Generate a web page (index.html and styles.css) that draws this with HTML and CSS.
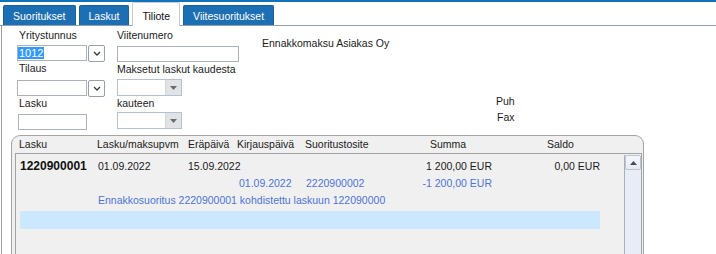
FILE: index.html
```html
<!DOCTYPE html>
<html lang="fi">
<head>
  <meta charset="UTF-8">
  <title>Tiliote</title>
  <link rel="stylesheet" href="styles.css">
</head>
<body>

  <div class="topbar"></div>
  <nav class="tabs">
    <span class="tab">Suoritukset</span>
    <span class="tab">Laskut</span>
    <span class="tab active">Tiliote</span>
    <span class="tab">Viitesuoritukset</span>
  </nav>

  <main class="page">
    <section class="filters">
      <div class="col col-a">
        <label class="lbl">Yritystunnus</label>
        <div class="field-row first">
          <span class="input w71"><span class="sel">1012</span></span>
          <span class="ddbtn">
            <svg width="8" height="5" viewBox="0 0 8 5"><path d="M1 1 L4 4 L7 1" fill="none" stroke="#3a3a3a" stroke-width="1.3"/></svg>
          </span>
        </div>
        <label class="lbl">Tilaus</label>
        <div class="field-row second">
          <span class="input w71"></span>
          <span class="ddbtn">
            <svg width="8" height="5" viewBox="0 0 8 5"><path d="M1 1 L4 4 L7 1" fill="none" stroke="#3a3a3a" stroke-width="1.3"/></svg>
          </span>
        </div>
        <label class="lbl">Lasku</label>
        <span class="input w69 third"></span>
      </div>

      <div class="col col-b">
        <label class="lbl">Viitenumero</label>
        <span class="input w122 first-b"></span>
        <label class="lbl gap1">Maksetut laskut kaudesta</label>
        <div class="combo second-b">
          <span class="combo-arrow">
            <svg width="7" height="4" viewBox="0 0 7 4"><path d="M0 0 H7 L3.5 4 Z" fill="#6b6b6b"/></svg>
          </span>
        </div>
        <label class="lbl gap1">kauteen</label>
        <div class="combo third-b">
          <span class="combo-arrow">
            <svg width="7" height="4" viewBox="0 0 7 4"><path d="M0 0 H7 L3.5 4 Z" fill="#6b6b6b"/></svg>
          </span>
        </div>
      </div>

      <div class="info">
        <div class="company">Ennakkomaksu Asiakas Oy</div>
        <div class="contact">
          <div>Puh</div>
          <div class="fax">Fax</div>
        </div>
      </div>
    </section>

    <section class="grid">
      <div class="grid-head">
        <span>Lasku</span>
        <span>Lasku/maksupvm</span>
        <span>Eräpäivä</span>
        <span>Kirjauspäivä</span>
        <span>Suoritustosite</span>
        <span>Summa</span>
        <span>Saldo</span>
      </div>
      <div class="grid-body">
        <div class="rows">
          <div class="row">
            <span class="id">1220900001</span>
            <span>01.09.2022</span>
            <span>15.09.2022</span>
            <span></span>
            <span></span>
            <span class="amt">1 200,00 EUR</span>
            <span class="amt">0,00 EUR</span>
          </div>
          <div class="row sub">
            <span></span>
            <span></span>
            <span></span>
            <span>01.09.2022</span>
            <span>2220900002</span>
            <span class="amt">-1 200,00 EUR</span>
            <span></span>
          </div>
          <div class="row sub">
            <span></span>
            <span class="note">Ennakkosuoritus 2220900001 kohdistettu laskuun 122090000</span>
          </div>
          <div class="hilite"></div>
        </div>
        <div class="scrollbar">
          <div class="sb-up">
            <svg width="7" height="4" viewBox="0 0 7 4"><path d="M0 4 H7 L3.5 0 Z" fill="#424c62"/></svg>
          </div>
        </div>
      </div>
    </section>
  </main>

</body>
</html>
```

FILE: styles.css
```css
body {
  margin: 0;
  height: 254px;
  overflow: hidden;
  font-family: "Liberation Sans", Arial, sans-serif;
  font-size: 10.5px;
  color: #1b1b1b;
  background: #fff;
}

/* tab strip */
.topbar {
  height: 2px;
  background: #0f72ba;
}
.tabs {
  display: flex;
  align-items: flex-end;
  gap: 3px;
  height: 23px;
  padding-left: 3px;
  border-bottom: 1px solid #8fa0b8;
}
.tab {
  box-sizing: border-box;
  height: 20px;
  padding: 1px 9px 0;
  line-height: 19px;
  background: #1d6fb3;
  color: #fff;
  border: 1px solid #1862a0;
  border-bottom: none;
  border-radius: 2px 2px 0 0;
}
.tab.active {
  height: 24px;
  margin-bottom: -1px;
  padding-top: 4px;
  background: #fff;
  color: #111;
  border-color: #c5ccd6;
}

/* page */
.page {
  margin-left: 1px;
  height: 228px;
  border-left: 1px solid #9c9c9c;
}
.filters {
  display: flex;
  padding: 3px 0 0 15px;
}
.col-a {
  width: 88px;
}
.col-b {
  width: 122px;
  margin-left: 12px;
}
.lbl {
  display: block;
  line-height: 13px;
  padding-left: 2px;
}
.lbl.gap1 {
  margin-top: 1px;
}
.col-b .lbl {
  padding-left: 0;
}

.input {
  display: block;
  box-sizing: border-box;
  height: 16px;
  border: 1px solid #abb2bd;
  background: #fff;
}
.w71 { width: 71px; }
.w69 { width: 69px; margin-left: 1px; }
.w122 { width: 122px; }

.field-row {
  display: flex;
  align-items: flex-start;
}
.field-row.first { margin-top: 3px; }
.field-row.second { margin-top: 5px; }
.input.third { margin-top: 4px; }
.input.first-b { margin-top: 4px; }
.combo.second-b { margin-top: 3px; }
.combo.third-b { margin-top: 2px; }

.sel {
  display: inline-block;
  margin: 1px 0 0 0;
  padding: 0 1px;
  line-height: 12px;
  font-size: 11px;
  background: #3399ff;
  color: #fff;
}
.ddbtn {
  box-sizing: border-box;
  width: 17px;
  height: 17px;
  margin-left: 1px;
  display: flex;
  align-items: center;
  justify-content: center;
  border: 1px solid #9a9ea6;
  border-radius: 2px;
  background: #fff;
}

.combo {
  box-sizing: border-box;
  display: flex;
  justify-content: flex-end;
  width: 65px;
  height: 17px;
  border: 1px solid #b4c1d3;
  background: #fff;
}
.combo-arrow {
  width: 15px;
  display: flex;
  align-items: center;
  justify-content: center;
  background: #e2e3e5;
  border-left: 1px solid #d4d6da;
}

.info {
  margin-left: 23px;
}
.company {
  margin-top: 8px;
  line-height: 13px;
}
.contact {
  margin: 43px 0 0 234px;
  line-height: 16px;
}
.fax {
  padding-left: 1px;
}

/* result grid */
.grid {
  box-sizing: border-box;
  width: 633px;
  height: 130px;
  margin: 5px 0 0 9px;
  border: 1px solid #a5a5a5;
  border-bottom: none;
  border-radius: 9px 9px 0 0;
  background: #f0f0f0;
}
.grid-head {
  display: grid;
  grid-template-columns: 78px 91px 49px 68px 125px 117px 1fr;
  height: 13px;
  padding: 2px 0 0 7px;
  line-height: 13px;
}
.grid-body {
  display: flex;
  height: 110px;
  margin: 2px 1px 0 3px;
  border: 1px solid #a3a3a3;
  border-bottom: none;
}
.rows {
  flex: 1;
  padding: 4px 0 0 4px;
}
.row {
  display: grid;
  grid-template-columns: 78px 90px 51px 67px 94px 92px 108px;
  line-height: 17px;
  white-space: nowrap;
}
.row .id {
  font-weight: bold;
  font-size: 12px;
  color: #111;
}
.row.sub {
  color: #4a74d9;
}
.note {
  grid-column: 2 / -1;
}
.amt {
  text-align: right;
}
.hilite {
  width: 580px;
  height: 18px;
  margin-top: 2px;
  background: #cce8ff;
}

.scrollbar {
  width: 16px;
  margin-top: 1px;
  background: #e8edf5;
  border-left: 1px solid #a9b0bb;
}
.sb-up {
  box-sizing: border-box;
  height: 15px;
  display: flex;
  align-items: center;
  justify-content: center;
  border: 1px solid #bcc4d0;
  border-radius: 2px;
  background: linear-gradient(#f6f7f9, #e7ebf1);
}
```
